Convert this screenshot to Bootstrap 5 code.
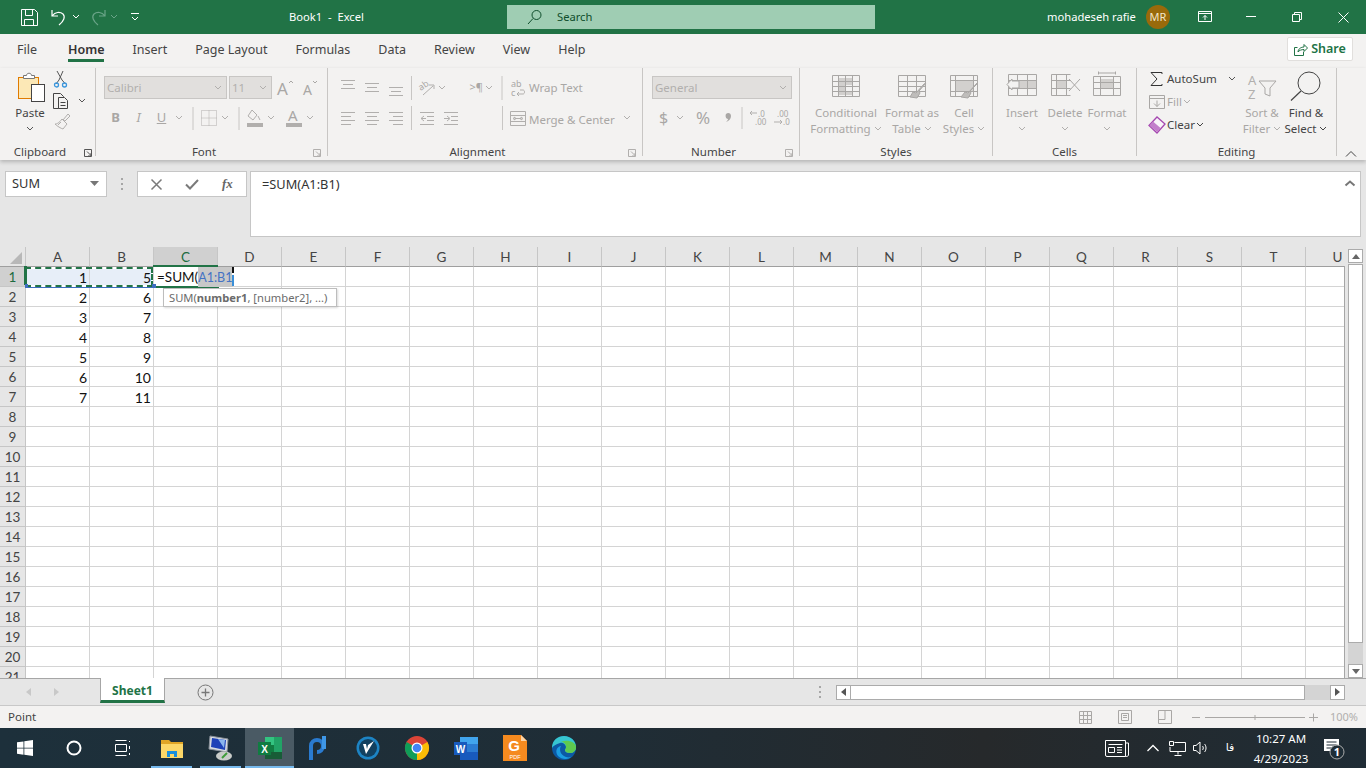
<!DOCTYPE html>
<html lang="en">
<head>
<meta charset="UTF-8">
<title>Book1 - Excel</title>
<link rel="stylesheet" href="https://cdn.jsdelivr.net/npm/bootstrap@5.3.0/dist/css/bootstrap.min.css">
<style>
  body { font-family: "Noto Sans", "Liberation Sans", sans-serif; font-size: 11.5px; color: #444; background: #e6e6e6; height: 768px; overflow: hidden; }
  svg { display: block; flex: none; overflow: visible; }
  .ico { fill: none; stroke: #b1afad; }
  .dis { color: #a9a7a5; }

  /* title bar */
  .xl-title { height: 34px; background: #217346; color: #fff; flex: none; font-size: 11.2px; }
  .qat { width: 289px; padding-left: 20px; }
  .doc-name { width: 218px; white-space: pre; }
  .xl-search { width: 368px; height: 24px; background: #9fcdb3; color: #0f4d2c; padding-left: 20px; gap: 14px; }
  .user-name { margin-left: 172px; width: 99px; }
  .avatar { width: 24px; height: 24px; border-radius: 50%; background: #996a0b; font-size: 11px; color: #f2e6c8; }
  .win-btn { width: 46px; }
  .win-first { margin-left: 12px; }

  /* tabs */
  .xl-tabs { height: 34px; background: #f3f2f1; font-size: 12.5px; padding-left: 17px; flex: none; }
  .rtab { margin-right: 28px; height: 34px; line-height: 32px; white-space: nowrap; }
  .rtab-file { margin-right: 31px; }
  .rtab-on { color: #333; font-weight: 600; border-bottom: 3px solid #217346; height: 28px; }
  .xl-share { width: 66px; height: 24px; background: #fff; border: 1px solid #e1dfdd; border-radius: 2px; color: #217346; font-weight: 600; font-size: 12.5px; margin: 3px 13px 0 auto; gap: 3px; }

  /* ribbon */
  .xl-ribbon { height: 92px; background: #f3f2f1; box-shadow: 0 2px 4px rgba(0,0,0,.22); position: relative; z-index: 3; flex: none; }
  .rgroup { height: 88px; border-right: 1px solid #c8c6c4; flex: none; }
  .g-clip { width: 96px; } .g-font { width: 232px; } .g-align { width: 315px; } .g-num { width: 157px; }
  .g-styles { width: 193px; } .g-cells { width: 144px; } .g-edit { width: 200px; }
  .gbody { height: 77px; }
  .glabel { height: 11px; line-height: 14px; color: #444; }
  .pl-8 { padding-left: 8px; } .pl-7 { padding-left: 7px; } .pl-9 { padding-left: 9px; }
  .rrow1 { height: 23px; }
  .rrow2 { height: 24px; margin-top: 7px; }
  .rcombo { height: 23px; background: #e1dfdd; border: 1px solid #c8c6c4; color: #b1afad; padding: 0 4px 0 2px; flex: none; }
  .c-font { width: 123px; margin-right: 2px; } .c-size { width: 43px; } .c-gen { width: 140px; }
  .tbtn { line-height: 16px; text-align: center; padding-top: 4px; flex: none; white-space: nowrap; }
  .tslot { height: 33px; }
  .tw78 { width: 78px; } .tw54 { width: 54px; } .tw50 { width: 50px; } .tw42 { width: 42px; } .tw44 { width: 44px; } .tw40 { width: 40px; } .tw46 { width: 46px; }
  .tline { height: 16px; white-space: nowrap; gap: 3px; }
  .paste-col { width: 44px; margin-left: 8px; color: #444; }
  .fmt-letter { width: 23px; font-size: 13px; color: #a9a7a5; text-align: center; flex: none; }
  .para-mark { width: 36px; font-size: 11px; flex: none; text-align: right; }
  .merge-txt { padding-top: 3px; }
  .elist { width: 104px; padding-left: 11px; margin-top: -1px; flex: none; }
  .erow { height: 23px; gap: 1px; }
  .rcollapse { margin-left: 8px; margin-top: 82px; }

  /* formula bar */
  .xl-fbar { height: 87px; background: #e6e6e6; padding: 11px 5px 0 5px; flex: none; }
  .xl-name { width: 102px; height: 26px; background: #fff; border: 1px solid #c6c6c6; padding: 0 6px; color: #333; font-size: 12.8px; }
  .fb-dots { width: 30px; height: 26px; }
  .fb-btns { width: 110px; height: 26px; background: #fff; border: 1px solid #c6c6c6; margin-right: 3px; }
  .fb-slot { width: 36px; }
  .fb-input { width: 1111px; height: 66px; background: #fff; border: 1px solid #c6c6c6; padding: 3px 4px 0 11px; font-size: 12.8px; color: #333; }

  /* sheet */
  .xl-main { height: 431px; flex: none; }
  .sheet-wrap { width: 1345px; height: 431px; overflow: hidden; position: relative; background: #fff; flex: none; }
  .sheet-grid { display: grid; grid-template-columns: 26px repeat(21, 64px); grid-auto-rows: 20px; font-family: Lato, "Liberation Sans", sans-serif; font-size: 14px; color: #111; }
  .cell { border-right: 1px solid #d4d4d4; border-bottom: 1px solid #d4d4d4; text-align: right; padding-right: 2px; line-height: 21px; }
  .cell-copy { background: #e7eef8; }
  .hd { background: #e6e6e6; border-right: 1px solid #c6c6c6; border-bottom: 1px solid #c6c6c6; text-align: center; padding: 0; color: #444; font-size: 13.5px; line-height: 20px; }
  .hd-col { border-bottom: 1px solid #9f9f9f; }
  .hd-on { background: #d0d0d0; color: #1c6b3f; }
  .sheet-edge { position: absolute; right: 0; top: 19px; bottom: 0; width: 1px; background: #a6a6a6; }
  .ant-base { position: absolute; left: 25px; top: 20px; width: 128px; height: 20px; border: 2px solid #fff; box-shadow: 0 1px 0 #3d6fc0; }
  .ant-box { position: absolute; left: 25px; top: 20px; width: 128px; height: 20px; border: 2px dashed #217346; }
  .ant-left { position: absolute; left: 24px; top: 19px; width: 3px; height: 19px; background: #217346; }
  .ant-dot { position: absolute; top: 37px; width: 3px; height: 4px; background: #3d6fc0; }
  .dot-a { left: 25px; } .dot-b { left: 152px; width: 4px; }
  .cur-cell { position: absolute; left: 153px; top: 18px; width: 65px; height: 23px; border-top: 2px solid #217346; border-bottom: 2px solid #217346; }
  .cur-handle { position: absolute; left: 214px; top: 39px; width: 5px; height: 4px; background: #217346; }
  .edit-txt { position: absolute; left: 157px; top: 20px; height: 20px; line-height: 20px; font-family: Lato, "Liberation Sans", sans-serif; font-size: 13.5px; color: #111; white-space: nowrap; }
  .edit-ref { color: #4472c4; background: #c8c8c8; display: inline-block; height: 20px; line-height: 21px; font-size: 12.5px; vertical-align: top; padding-right: 1px; }
  .edit-caret { position: absolute; left: 232px; top: 20px; width: 2px; height: 19px; background: linear-gradient(#111 0 30%, #fff 30% 40%, #3a8fd8 40% 100%); }
  .fn-tip { position: absolute; left: 163px; top: 41px; width: 174px; height: 19px; background: #fff; border: 1px solid #bdbdbd; box-shadow: 1px 1px 2px rgba(0,0,0,.15); color: #6b6b6b; padding-left: 5px; line-height: 17px; font-size: 11.2px; white-space: nowrap; }
  .vbar { width: 21px; height: 431px; background: #e6e6e6; padding: 2px 3px 0 3px; flex: none; }
  .sb-btn { height: 14px; background: #fff; border: 1px solid #ababab; flex: none; }
  .sb-thumb { height: 379px; background: #fff; border: 1px solid #ababab; margin-top: 1px; flex: none; }
  .sb-track { background: #d4d4d4; flex-grow: 1; }

  /* sheet tabs */
  .xl-sheets { height: 28px; background: #e6e6e6; border-top: 1px solid #a6a6a6; border-bottom: 1px solid #c8c8c8; flex: none; }
  .sh-nav { width: 100px; padding-left: 26px; gap: 22px; }
  .sh-tab { width: 65px; height: 25px; background: #fff; border: 1px solid #a6a6a6; border-top: 0; border-bottom: 3px solid #217346; color: #217346; font-weight: 700; font-size: 12px; margin-top: -1px; padding-top: 3px; align-self: flex-start; }
  .sh-add { margin-left: 32px; width: 622px; }
  .sh-dots { width: 17px; }
  .hbar { width: 509px; height: 15px; }
  .hb-btn { width: 15px; height: 15px; background: #fff; border: 1px solid #ababab; flex: none; }
  .hb-thumb { width: 454px; height: 15px; background: #fff; border: 1px solid #ababab; border-left: 0; flex: none; }
  .hb-track { flex-grow: 1; height: 15px; background: #d4d4d4; }

  /* status */
  .xl-status { height: 22px; background: #f3f2f1; padding: 0 8px; color: #444; flex: none; }
  .st-right { margin-left: auto; color: #b1afad; }
  .st-view { width: 40px; }
  .st-slider { width: 138px; padding-left: 7px; }
  .st-zoom { width: 35px; font-size: 11px; }

  /* taskbar */
  .xl-task { height: 40px; background: linear-gradient(90deg, #1d303b 0%, #1f2d36 45%, #26292b 72%, #1f2c35 100%); color: #fff; flex: none; font-size: 11.5px; }
  .tk { width: 49px; height: 40px; position: relative; flex: none; }
  .tk-on { background: #4a5a64; }
  .tk-run::after { content: ""; position: absolute; left: 4px; right: 4px; bottom: 0; height: 2px; background: #76b9ed; }
  .tk-on::after { left: 0; right: 0; }
  .tk-tray { margin-left: auto; padding-right: 15px; }
  .tray { width: 24px; }
  .tray-news { width: 36px; margin-right: 6px; }
  .tray-lang { width: 34px; font-family: "DejaVu Sans", sans-serif; font-size: 11px; }
  .tk-clock { width: 68px; text-align: center; line-height: 20px; padding-top: 1px; white-space: nowrap; }
  .tk-note { width: 36px; }
</style>
</head>
<body class="d-flex flex-column">

  <!-- title bar -->
  <div class="xl-title d-flex align-items-center">
    <div class="qat d-flex align-items-center">
      <svg width="22" height="20" viewBox="0 0 22 20" fill="none" stroke="#fff"><path d="M1.500 2.500h13l3 3v13h-16zM5.500 2.500v6h7v-6M4.500 18.500v-6h9v6"/></svg>
      <svg width="27" height="20" viewBox="-9 0 27 20" fill="none" stroke="#fff" stroke-width="1.200"><path d="M1 3v6h6M1.500 8.500C4 5 9 4.500 12 7c2.500 2.500 1 7-4 11"/></svg>
      <svg width="12" height="6" viewBox="-3 0 12 6" fill="none" stroke="#fff"><path d="M1 1l3 3 3-3"/></svg>
      <svg width="25" height="20" viewBox="-9 0 25 20" fill="none" stroke="#6aa488" stroke-width="1.200"><path d="M15 3v6H9M14.500 8.500C12 5 7 4.500 4 7c-2.500 2.500-1 7 4 11"/></svg>
      <svg width="14" height="6" viewBox="-4 0 14 6" fill="none" stroke="#6aa488"><path d="M1 1l3 3 3-3"/></svg>
      <svg width="30" height="10" viewBox="-10 0 30 10" fill="none" stroke="#fff"><path d="M1 1.500h8M2 5l3 3 3-3"/></svg>
    </div>
    <div class="doc-name">Book1  -  Excel</div>
    <div class="xl-search d-flex align-items-center">
      <svg width="16" height="16" viewBox="0 0 16 16" fill="none" stroke="#0f4d2c"><circle cx="9.500" cy="6" r="4.500"/><path d="M6 9.500L1 15"/></svg>
      <span>Search</span>
    </div>
    <div class="user-name">mohadeseh rafie</div>
    <div class="avatar d-flex align-items-center justify-content-center">MR</div>
    <div class="win-btn win-first d-flex justify-content-center"><svg width="14" height="12" viewBox="0 0 14 12" fill="none" stroke="#fff"><path d="M.5 .5h13v10H.5zM.5 2.500h13M7 9V4.500M5 6.500l2-2 2 2"/></svg></div>
    <div class="win-btn d-flex justify-content-center"><svg width="10" height="2" viewBox="0 0 10 2" stroke="#fff"><path d="M0 .5h10"/></svg></div>
    <div class="win-btn d-flex justify-content-center"><svg width="10" height="10" viewBox="0 0 10 10" fill="none" stroke="#fff"><path d="M.5 2.500h7v7h-7zM2.500 2.500v-2h7v7h-2"/></svg></div>
    <div class="win-btn d-flex justify-content-center"><svg width="11" height="11" viewBox="0 0 11 11" fill="none" stroke="#fff"><path d="M.5 .5l10 10M10.500 .5l-10 10"/></svg></div>
  </div>

  <!-- ribbon tabs -->
  <div class="xl-tabs d-flex align-items-start">
    <div class="rtab rtab-file">File</div>
    <div class="rtab rtab-on">Home</div>
    <div class="rtab">Insert</div>
    <div class="rtab">Page Layout</div>
    <div class="rtab">Formulas</div>
    <div class="rtab">Data</div>
    <div class="rtab">Review</div>
    <div class="rtab">View</div>
    <div class="rtab">Help</div>
    <div class="xl-share d-flex align-items-center justify-content-center">
      <svg width="14" height="13" viewBox="0 0 14 13" fill="none" stroke="#217346"><path d="M3.500 4.500H.5v8h9V9M4 9c0-3 3-5 6-5V1.500l3.500 3.500L10 8.500V6.500C7.500 6.500 5 7.500 4 9z"/></svg>
      <span>Share</span>
    </div>
  </div>

  <!-- ribbon -->
  <div class="xl-ribbon d-flex">
    <!-- clipboard -->
    <div class="rgroup g-clip d-flex flex-column">
      <div class="gbody d-flex">
        <div class="paste-col tbtn d-flex flex-column align-items-center">
          <svg class="tslot" width="32" height="33" viewBox="0 0 32 33"><rect x="4.500" y="5.500" width="20" height="21" fill="#fce8b6" stroke="#e07b00"/><path d="M9.500 6.500v-3h3c0-3 5-3 5 0h3v3z" fill="#fff" stroke="#777"/><rect x="17.500" y="12.500" width="13" height="17" fill="#fff" stroke="#444"/></svg>
          <div>Paste</div>
          <div class="tline d-flex align-items-center"><svg width="8" height="6" viewBox="0 0 8 6" fill="none" stroke="#555"><path d="M1 1l3 3 3-3"/></svg></div>
        </div>
        <div class="d-flex flex-column">
          <svg width="20" height="22" viewBox="0 -3 20 22" fill="none"><path d="M5 0l5 9 3.500 4M11 0L7 9l-3 4" stroke="#555"/><circle cx="4.500" cy="14" r="2" stroke="#3a96dd" stroke-width="1.300"/><circle cx="12.500" cy="14" r="2" stroke="#3a96dd" stroke-width="1.300"/></svg>
          <div class="d-flex align-items-center">
            <svg width="26" height="22" viewBox="0 0 26 22" fill="#f3f2f1" stroke="#444"><path d="M1.500 3.500h7l3 3v12h-10z"/><path d="M6.500 7.500h6l3 3v8h-9zM8.500 12.500h5M8.500 15.500h5"/></svg>
            <svg width="8" height="6" viewBox="0 0 8 6" fill="none" stroke="#555"><path d="M1 1l3 3 3-3"/></svg>
          </div>
          <svg width="20" height="20" viewBox="0 0 20 20" fill="none" stroke="#b1afad"><path d="M11 8l5-6 2 2-5 5zM10 7l5 5-4 5c-2-.5-6-3-8-5 2 0 4-1 7-5zM6 13l3-3"/></svg>
        </div>
      </div>
      <div class="glabel d-flex"><div class="flex-fill text-center">Clipboard</div><svg class="mt-1" width="15" height="10" viewBox="0 0 15 10" fill="none" stroke="#555"><path d="M4.500 .5h7v7h-7zM7 2.500l4 4M11 4v3H8"/></svg></div>
    </div>

    <!-- font -->
    <div class="rgroup g-font d-flex flex-column">
      <div class="gbody pl-8 pt-2">
        <div class="rrow1 d-flex align-items-center">
          <div class="rcombo c-font d-flex align-items-center justify-content-between"><span>Calibri</span><svg width="8" height="6" viewBox="0 0 8 6" fill="none" stroke="#b1afad"><path d="M1 1l3 3 3-3"/></svg></div>
          <div class="rcombo c-size d-flex align-items-center justify-content-between"><span>11</span><svg width="8" height="6" viewBox="0 0 8 6" fill="none" stroke="#b1afad"><path d="M1 1l3 3 3-3"/></svg></div>
          <svg width="26" height="23" viewBox="0 0 26 23"><text x="5" y="19" font-family="Noto Sans" font-size="17" fill="#a9a7a5">A</text><path d="M17 7l2-2 2 2" fill="none" stroke="#a9a7a5"/></svg>
          <svg width="24" height="23" viewBox="0 0 24 23"><text x="5" y="19" font-family="Noto Sans" font-size="14" fill="#a9a7a5">A</text><path d="M15 5l2 2 2-2" fill="none" stroke="#a9a7a5"/></svg>
        </div>
        <div class="rrow2 d-flex align-items-center">
          <span class="fmt-letter fw-bold">B</span>
          <span class="fmt-letter fst-italic">I</span>
          <span class="fmt-letter text-decoration-underline">U</span>
          <svg width="14" height="6" viewBox="0 0 14 6" fill="none" stroke="#b1afad"><path d="M3 1l3 3 3-3"/></svg>
          <svg width="12" height="24" viewBox="0 0 12 24" stroke="#c8c6c4"><path d="M6 1v23"/></svg>
          <svg width="19" height="16" viewBox="0 0 19 16" fill="none" stroke="#b1afad" stroke-dasharray="1 1"><path d="M2.500 .5h15v15h-15zM10 .5v15M2.500 8h15"/></svg>
          <svg width="16" height="6" viewBox="0 0 16 6" fill="none" stroke="#b1afad"><path d="M4 1l3 3 3-3"/></svg>
          <svg width="10" height="24" viewBox="0 0 10 24" stroke="#c8c6c4"><path d="M5 1v23"/></svg>
          <svg width="22" height="18" viewBox="0 0 22 18"><path d="M8 1l5 5-4 5-5-4zM14 7l2 4" fill="none" stroke="#b1afad"/><rect x="3" y="14" width="16" height="4" fill="#b1afad"/></svg>
          <svg width="12" height="6" viewBox="0 0 12 6" fill="none" stroke="#b1afad"><path d="M2 1l3 3 3-3"/></svg>
          <svg width="26" height="18" viewBox="0 0 26 18"><text x="10" y="12" font-family="Noto Sans" font-size="15" fill="#a9a7a5">A</text><rect x="8" y="14" width="16" height="4" fill="#b1afad"/></svg>
          <svg width="14" height="6" viewBox="0 0 14 6" fill="none" stroke="#b1afad"><path d="M3 1l3 3 3-3"/></svg>
        </div>
      </div>
      <div class="glabel d-flex"><div class="flex-fill text-center">Font</div><svg class="mt-1" width="15" height="10" viewBox="0 0 15 10" fill="none" stroke="#b1afad"><path d="M1.500 .5h7v7h-7zM4 2.500l4 4M8 4v3H5"/></svg></div>
    </div>

    <!-- alignment -->
    <div class="rgroup g-align d-flex flex-column">
      <div class="gbody pl-8 pt-2">
        <div class="rrow1 d-flex align-items-center">
          <svg width="24" height="20" viewBox="0 0 24 20" class="ico"><path d="M5 2.500h14M7 6.500h10M5 10.500h14"/></svg>
          <svg width="24" height="20" viewBox="0 0 24 20" class="ico"><path d="M5 5.500h14M7 9.500h10M5 13.500h14"/></svg>
          <svg width="24" height="20" viewBox="0 0 24 20" class="ico"><path d="M5 9.500h14M7 13.500h10M5 17.500h14"/></svg>
          <svg width="7" height="24" viewBox="0 0 7 24" stroke="#c8c6c4"><path d="M3.500 0v24"/></svg>
          <svg width="23" height="20" viewBox="0 0 23 20"><text x="4" y="11" font-family="Noto Sans" font-size="9" fill="#a9a7a5" transform="rotate(-35 8 9)">ab</text><path d="M8 17l10-9M14 7h5v4" fill="none" stroke="#b1afad"/></svg>
          <svg width="9" height="6" viewBox="0 0 9 6" fill="none" stroke="#b1afad"><path d="M1 1l3 3 3-3"/></svg>
          <span class="dis para-mark">&gt;¶</span>
          <svg width="13" height="6" viewBox="0 0 13 6" fill="none" stroke="#b1afad"><path d="M3 1l3 3 3-3"/></svg>
          <svg width="12" height="24" viewBox="0 0 12 24" stroke="#c8c6c4"><path d="M6 0v24"/></svg>
          <svg width="21" height="20" viewBox="0 0 21 20"><text x="3" y="9" font-family="Noto Sans" font-size="9" fill="#a9a7a5">ab</text><text x="3" y="18" font-family="Noto Sans" font-size="9" fill="#a9a7a5">c</text><path d="M10 16h5c2 0 2-4 0-4h-3M11 14l-2 2 2 2" fill="none" stroke="#b1afad"/></svg>
          <span class="dis">Wrap Text</span>
        </div>
        <div class="rrow2 d-flex align-items-center">
          <svg width="24" height="20" viewBox="0 0 24 20" class="ico"><path d="M5 4.500h14M5 8.500h10M5 12.500h14M5 16.500h10"/></svg>
          <svg width="24" height="20" viewBox="0 0 24 20" class="ico"><path d="M5 4.500h14M7 8.500h10M5 12.500h14M7 16.500h10"/></svg>
          <svg width="24" height="20" viewBox="0 0 24 20" class="ico"><path d="M5 4.500h14M9 8.500h10M5 12.500h14M9 16.500h10"/></svg>
          <svg width="7" height="24" viewBox="0 0 7 24" stroke="#c8c6c4"><path d="M3.500 0v24"/></svg>
          <svg width="24" height="20" viewBox="0 0 24 20" class="ico"><path d="M5 4.500h14M12 8.500h7M12 12.500h7M5 16.500h14M9 8l-3 2.500 3 2.500M6 10.500h5"/></svg>
          <svg width="24" height="20" viewBox="0 0 24 20" class="ico"><path d="M5 4.500h14M12 8.500h7M12 12.500h7M5 16.500h14M8 8l3 2.500L8 13M5 10.500h5"/></svg>
          <svg width="45" height="24" viewBox="0 0 45 24" stroke="#c8c6c4"><path d="M39.500 0v24"/></svg>
          <svg width="21" height="18" viewBox="0 0 21 18" class="ico"><path d="M2.500 2.500h15v14h-15zM2.500 6.500h15M2.500 12.500h15M7 9.500h6M5 9.500l2-1.500v3zM15 9.500l-2-1.500v3z"/></svg>
          <span class="dis merge-txt">Merge &amp; Center</span>
          <svg class="ms-2" width="10" height="6" viewBox="0 0 10 6" fill="none" stroke="#b1afad"><path d="M1 1l3 3 3-3"/></svg>
        </div>
      </div>
      <div class="glabel d-flex"><div class="flex-fill text-center">Alignment</div><svg class="mt-1" width="15" height="10" viewBox="0 0 15 10" fill="none" stroke="#b1afad"><path d="M1.500 .5h7v7h-7zM4 2.500l4 4M8 4v3H5"/></svg></div>
    </div>

    <!-- number -->
    <div class="rgroup g-num d-flex flex-column">
      <div class="gbody pl-9 pt-2">
        <div class="rrow1 d-flex align-items-center">
          <div class="rcombo c-gen d-flex align-items-center justify-content-between"><span>General</span><svg width="8" height="6" viewBox="0 0 8 6" fill="none" stroke="#b1afad"><path d="M1 1l3 3 3-3"/></svg></div>
        </div>
        <div class="rrow2 d-flex align-items-center">
          <span class="fmt-letter fs-6">$</span>
          <svg width="12" height="6" viewBox="0 0 12 6" fill="none" stroke="#b1afad"><path d="M2 1l3 3 3-3"/></svg>
          <svg width="32" height="20" viewBox="0 0 32 20"><text x="16" y="16" text-anchor="middle" font-family="Noto Sans" font-size="17" fill="#a9a7a5">%</text></svg>
          <svg width="18" height="20" viewBox="0 0 18 20"><path d="M7 6c2-2 5-1 5 2 0 3-2 5-5 6 1-1 2-2 2-3-2 0-3-3-2-5z" fill="#a9a7a5"/></svg>
          <svg width="10" height="24" viewBox="0 0 10 24" stroke="#c8c6c4"><path d="M5 1v22"/></svg>
          <svg width="22" height="20" viewBox="0 0 22 20"><text x="11" y="9" font-family="Noto Sans" font-size="8" fill="#a9a7a5">.0</text><text x="8" y="17" font-family="Noto Sans" font-size="8" fill="#a9a7a5">.00</text><path d="M3 5h7M5 3L3 5l2 2" fill="none" stroke="#b1afad"/></svg>
          <svg width="24" height="20" viewBox="0 0 24 20"><text x="8" y="9" font-family="Noto Sans" font-size="8" fill="#a9a7a5">.00</text><text x="14" y="17" font-family="Noto Sans" font-size="8" fill="#a9a7a5">.0</text><path d="M5 14h8M11 12l2 2-2 2" fill="none" stroke="#b1afad"/></svg>
        </div>
      </div>
      <div class="glabel d-flex"><div class="flex-fill text-center">Number</div><svg class="mt-1" width="15" height="10" viewBox="0 0 15 10" fill="none" stroke="#b1afad"><path d="M1.500 .5h7v7h-7zM4 2.500l4 4M8 4v3H5"/></svg></div>
    </div>

    <!-- styles -->
    <div class="rgroup g-styles d-flex flex-column">
      <div class="gbody d-flex pl-7 dis">
        <div class="tbtn tw78 d-flex flex-column align-items-center">
          <svg class="tslot" width="30" height="33" viewBox="0 -3 30 33" fill="none" stroke="#a9a7a5"><rect x="7" y="3" width="14" height="17" fill="#d2d0ce" stroke="none"/><rect x="14" y="10" width="7" height="6" fill="#f3f2f1" stroke="none"/><path d="M1.500 .5h27v21h-27zM1.500 6.500h27M1.500 11.500h27M1.500 16.500h27M7.500 .5v21M14.500 .5v21M21.500 .5v21"/></svg>
          <div>Conditional</div>
          <div class="tline d-flex align-items-center">Formatting<svg width="8" height="6" viewBox="0 0 8 6" fill="none" stroke="#b1afad"><path d="M1 1l3 3 3-3"/></svg></div>
        </div>
        <div class="tbtn tw54 d-flex flex-column align-items-center">
          <svg class="tslot" width="30" height="33" viewBox="0 -3 30 33" fill="none" stroke="#a9a7a5"><path d="M1.500 .5h27v21h-27zM1.500 6.500h27M1.500 11.500h27M1.500 16.500h27M10.500 .5v21M19.500 .5v21"/><path d="M27 9l-8 9-3-1-3 5 7 1 3-5-1-2 7-8z" fill="#bfbdbb"/></svg>
          <div>Format as</div>
          <div class="tline d-flex align-items-center">Table<svg width="8" height="6" viewBox="0 0 8 6" fill="none" stroke="#b1afad"><path d="M1 1l3 3 3-3"/></svg></div>
        </div>
        <div class="tbtn tw50 d-flex flex-column align-items-center">
          <svg class="tslot" width="30" height="33" viewBox="0 -3 30 33" fill="none" stroke="#a9a7a5"><rect x="6" y="5" width="19" height="12" fill="#d2d0ce" stroke="none"/><path d="M1.500 .5h27v21h-27zM1.500 5.500h27M1.500 16.500h27M6.500 .5v21M24.500 .5v21"/><path d="M28 8l-9 10-3-1-4 5 7 1 3-5-1-2 8-8z" fill="#bfbdbb"/></svg>
          <div>Cell</div>
          <div class="tline d-flex align-items-center">Styles<svg width="8" height="6" viewBox="0 0 8 6" fill="none" stroke="#b1afad"><path d="M1 1l3 3 3-3"/></svg></div>
        </div>
      </div>
      <div class="glabel text-center">Styles</div>
    </div>

    <!-- cells -->
    <div class="rgroup g-cells d-flex flex-column">
      <div class="gbody d-flex pl-8 dis">
        <div class="tbtn tw42 d-flex flex-column align-items-center">
          <svg class="tslot" width="32" height="33" viewBox="0 -1 32 33" fill="none" stroke="#a9a7a5"><rect x="12" y="7" width="19" height="9" fill="#d2d0ce" stroke="none"/><path d="M2.500 1.500h28v21h-28zM2.500 7.500h28M2.500 15.500h28M11.500 1.500v21M21.500 1.500v21"/><path d="M13 8H6V6l-5 5.500 5 5.500v-2h7z" fill="#f3f2f1"/></svg>
          <div>Insert</div>
          <div class="tline d-flex align-items-center"><svg width="8" height="6" viewBox="0 0 8 6" fill="none" stroke="#b1afad"><path d="M1 1l3 3 3-3"/></svg></div>
        </div>
        <div class="tbtn tw44 d-flex flex-column align-items-center">
          <svg class="tslot" width="32" height="33" viewBox="0 -1 32 33" fill="none" stroke="#a9a7a5"><rect x="7" y="7" width="11" height="9" fill="#d2d0ce" stroke="none"/><path d="M21.500 1.500h-19v21h19M2.500 7.500h19M2.500 15.500h19M7.500 1.500v21M17.500 1.500v21M20 6l11 12M31 6L20 18"/></svg>
          <div>Delete</div>
          <div class="tline d-flex align-items-center"><svg width="8" height="6" viewBox="0 0 8 6" fill="none" stroke="#b1afad"><path d="M1 1l3 3 3-3"/></svg></div>
        </div>
        <div class="tbtn tw40 d-flex flex-column align-items-center">
          <svg class="tslot" width="30" height="33" viewBox="0 1 30 33" fill="none" stroke="#a9a7a5"><rect x="8" y="8" width="14" height="9" fill="#d2d0ce" stroke="none"/><path d="M1.500 5.500h27v19h-27zM1.500 11.500h27M1.500 17.500h27M8.500 5.500v19M21.500 5.500v19M6.500 .5v3M23.500 .5v3M6.500 2h17"/></svg>
          <div>Format</div>
          <div class="tline d-flex align-items-center"><svg width="8" height="6" viewBox="0 0 8 6" fill="none" stroke="#b1afad"><path d="M1 1l3 3 3-3"/></svg></div>
        </div>
      </div>
      <div class="glabel text-center">Cells</div>
    </div>

    <!-- editing -->
    <div class="rgroup g-edit d-flex flex-column">
      <div class="gbody d-flex">
        <div class="elist">
          <div class="erow d-flex align-items-center">
            <svg width="18" height="16" viewBox="0 0 18 16" fill="none" stroke="#333"><path d="M14 3V1.500H3L9 8l-6 6.500h11V13"/></svg>
            <span>AutoSum</span>
            <svg class="ms-2" width="12" height="6" viewBox="0 0 12 6" fill="none" stroke="#555"><path d="M3 1l3 3 3-3"/></svg>
          </div>
          <div class="erow d-flex align-items-center dis">
            <svg width="18" height="16" viewBox="0 0 18 16" fill="none" stroke="#a9a7a5"><path d="M1.500 1.500h15v13h-15zM1.500 4.500h15M9 6.500v6M6 9.500l3 3 3-3"/></svg>
            <span>Fill</span>
            <svg width="8" height="6" viewBox="0 0 8 6" fill="none" stroke="#b1afad"><path d="M1 1l3 3 3-3"/></svg>
          </div>
          <div class="erow d-flex align-items-center">
            <svg width="18" height="18" viewBox="0 0 18 18"><path d="M1 9.500L9 1l8 7-8 9z" fill="#f8f3f9" stroke="#a548b0" stroke-width="1.300"/><path d="M1.500 9.500l3.500-4 7.500 6.500L9 16z" fill="#c27fcb"/></svg>
            <span>Clear</span>
            <svg width="8" height="6" viewBox="0 0 8 6" fill="none" stroke="#444"><path d="M1 1l3 3 3-3"/></svg>
          </div>
        </div>
        <div class="tbtn tw42 d-flex flex-column align-items-center dis">
          <svg class="tslot" width="32" height="33" viewBox="0 0 32 33" fill="none"><text x="2" y="13" font-family="Noto Sans" font-size="13" fill="#b1afad">A</text><text x="2" y="27" font-family="Noto Sans" font-size="13" fill="#b1afad">Z</text><path d="M13 9h17l-6 7v8l-5-2v-6z" stroke="#a9a7a5"/></svg>
          <div>Sort &amp;</div>
          <div class="tline d-flex align-items-center">Filter<svg width="8" height="6" viewBox="0 0 8 6" fill="none" stroke="#b1afad"><path d="M1 1l3 3 3-3"/></svg></div>
        </div>
        <div class="tbtn tw46 d-flex flex-column align-items-center">
          <svg class="tslot" width="32" height="33" viewBox="0 0 32 33" fill="none" stroke="#444"><circle cx="19" cy="11" r="11"/><path d="M11 19L1 28.500" stroke-width="1.200"/></svg>
          <div>Find &amp;</div>
          <div class="tline d-flex align-items-center">Select<svg width="8" height="6" viewBox="0 0 8 6" fill="none" stroke="#444"><path d="M1 1l3 3 3-3"/></svg></div>
        </div>
      </div>
      <div class="glabel text-center">Editing</div>
    </div>
    <svg class="rcollapse" width="12" height="8" viewBox="0 0 12 8" fill="none" stroke="#444"><path d="M1 6.500l5-5 5 5"/></svg>
  </div>

  <!-- formula bar -->
  <div class="xl-fbar d-flex align-items-start">
    <div class="xl-name d-flex align-items-center justify-content-between">SUM<svg width="10" height="6" viewBox="0 0 10 6" fill="#777"><path d="M0 0h9L4.500 5z"/></svg></div>
    <div class="fb-dots d-flex align-items-center justify-content-center"><svg width="3" height="12" viewBox="0 0 3 12" fill="#a6a6a6"><rect y="0" width="2" height="2"/><rect y="5" width="2" height="2"/><rect y="10" width="2" height="2"/></svg></div>
    <div class="fb-btns d-flex align-items-center">
      <div class="fb-slot d-flex justify-content-center"><svg width="11" height="11" viewBox="0 0 11 11" fill="none" stroke="#7a7a7a" stroke-width="1.500"><path d="M.5 .5l10 10M10.500 .5l-10 10"/></svg></div>
      <div class="fb-slot d-flex justify-content-center"><svg width="14" height="11" viewBox="0 0 14 11" fill="none" stroke="#7a7a7a" stroke-width="2"><path d="M1 5.500l4 4 8-8.500"/></svg></div>
      <div class="fb-slot d-flex justify-content-center"><svg width="16" height="14" viewBox="0 0 16 14"><text x="2" y="11" font-family="Liberation Serif" font-style="italic" font-weight="700" font-size="13" fill="#666">fx</text></svg></div>
    </div>
    <div class="fb-input d-flex justify-content-between align-items-start">=SUM(A1:B1)<svg class="mt-1" width="12" height="8" viewBox="0 0 12 8" fill="none" stroke="#777" stroke-width="2"><path d="M1.500 6.500l4.500-4 4.500 4"/></svg></div>
  </div>

  <!-- sheet -->
  <div class="xl-main d-flex">
    <div class="sheet-wrap">
      <div class="sheet-grid" id="grid"></div>
      <!-- overlays on the sheet: copy range, active cell, function tip -->
      <div class="sheet-edge"></div>
      <div class="ant-base"></div>
      <div class="ant-box"></div>
      <div class="ant-left"></div>
      <div class="ant-dot dot-a"></div>
      <div class="cur-cell"></div>
      <div class="ant-dot dot-b"></div>
      <div class="cur-handle"></div>
      <div class="edit-txt">=SUM(<span class="edit-ref">A1:B1</span></div>
      <div class="edit-caret"></div>
      <div class="fn-tip">SUM(<b>number1</b>, [number2], ...)</div>
    </div>
    <div class="vbar d-flex flex-column">
      <div class="sb-btn d-flex align-items-center justify-content-center"><svg width="8" height="5" viewBox="0 0 8 5" fill="#666"><path d="M4 0l4 5H0z"/></svg></div>
      <div class="sb-thumb"></div>
      <div class="sb-track"></div>
      <div class="sb-btn d-flex align-items-center justify-content-center"><svg width="8" height="5" viewBox="0 0 8 5" fill="#666"><path d="M4 5L8 0H0z"/></svg></div>
    </div>
  </div>

  <!-- sheet tabs -->
  <div class="xl-sheets d-flex align-items-center">
    <div class="sh-nav d-flex align-items-center">
      <svg width="6" height="8" viewBox="0 0 6 8" fill="#c8c8c8"><path d="M5 0v8L0 4z"/></svg>
      <svg width="6" height="8" viewBox="0 0 6 8" fill="#c8c8c8"><path d="M0 0v8l5-4z"/></svg>
    </div>
    <div class="sh-tab d-flex align-items-center justify-content-center">Sheet1</div>
    <div class="sh-add">
      <svg width="17" height="17" viewBox="0 0 17 17" fill="none" stroke="#777"><circle cx="8.500" cy="8.500" r="7.500"/><path d="M8.500 4.500v8M4.500 8.500h8" stroke-width="1.300"/></svg>
    </div>
    <div class="sh-dots"><svg width="3" height="12" viewBox="0 0 3 12" fill="#a6a6a6"><rect y="0" width="2" height="2"/><rect y="5" width="2" height="2"/><rect y="10" width="2" height="2"/></svg></div>
    <div class="hbar d-flex">
      <div class="hb-btn d-flex align-items-center justify-content-center"><svg width="5" height="8" viewBox="0 0 5 8" fill="#555"><path d="M5 0v8L0 4z"/></svg></div>
      <div class="hb-thumb"></div>
      <div class="hb-track"></div>
      <div class="hb-btn d-flex align-items-center justify-content-center"><svg width="5" height="8" viewBox="0 0 5 8" fill="#555"><path d="M0 0v8l5-4z"/></svg></div>
    </div>
  </div>

  <!-- status bar -->
  <div class="xl-status d-flex align-items-center">
    <span>Point</span>
    <div class="st-right d-flex align-items-center">
      <div class="st-view d-flex justify-content-center"><svg width="13" height="13" viewBox="0 0 13 13" fill="none" stroke="#a9a7a5"><path d="M.5 .5h12v12H.5zM4.500 .5v12M8.500 .5v12M.5 4.500h12M.5 8.500h12"/></svg></div>
      <div class="st-view d-flex justify-content-center"><svg width="14" height="14" viewBox="0 0 14 14" fill="none" stroke="#a9a7a5"><path d="M.5 .5h13v13H.5zM3.500 3.500h7v7h-7zM5 5.500h4M5 7.500h4"/></svg></div>
      <div class="st-view d-flex justify-content-center"><svg width="14" height="14" viewBox="0 0 14 14" fill="none" stroke="#a9a7a5"><path d="M.5 .5h13v13H.5zM.5 9.500h6.500V.5"/></svg></div>
      <div class="st-slider"><svg width="126" height="9" viewBox="0 0 126 9" fill="none" stroke="#a9a7a5"><path d="M0 4.500h8M13 4.500h100M63 2v5M117 4.500h9M121.500 .5v8"/></svg></div>
      <span class="st-zoom text-end">100%</span>
    </div>
  </div>

  <!-- taskbar -->
  <div class="xl-task d-flex align-items-center">
    <div class="tk d-flex align-items-center justify-content-center"><svg width="16" height="16" viewBox="0 0 16 16" fill="#fff"><path d="M0 2.300l6.500-.9v6.300H0zM7.300 1.300L16 0v7.700H7.300zM0 8.400h6.500v6.300L0 13.800zM7.300 8.400H16V16l-8.700-1.200z"/></svg></div>
    <div class="tk d-flex align-items-center justify-content-center"><svg width="16" height="16" viewBox="0 0 16 16" fill="none" stroke="#fff" stroke-width="2"><circle cx="8" cy="8" r="6.500"/></svg></div>
    <div class="tk d-flex align-items-center justify-content-center"><svg width="16" height="16" viewBox="0 0 16 16" fill="none" stroke="#fff"><path d="M.5 .5h11M.5 15.500h11M.5 4.500h11v7H.5zM14.500 1v1M14.500 6v3M14.500 13v2"/></svg></div>
    <div class="tk tk-run d-flex align-items-center justify-content-center"><svg width="22" height="20" viewBox="0 0 22 20"><path d="M0 2h8l2 2h12v4H0z" fill="#e0a526"/><rect y="6" width="22" height="14" fill="#fcd768"/><path d="M6 19v-6h10v6h-3v-3H9v3z" fill="#1a8fdb"/></svg></div>
    <div class="tk tk-run d-flex align-items-center justify-content-center"><svg width="26" height="26" viewBox="0 0 26 26"><path d="M2 1l18 3-1 13L1 14z" fill="#d8dce2" stroke="#8b929b"/><path d="M4 3l14 2-1 10L3 12z" fill="#1f42b8"/><path d="M10 4l7 1-1 8z" fill="#8bb6ee"/><ellipse cx="16" cy="21" rx="8" ry="4.500" fill="#c9ccc9"/><path d="M14 23l5-5" stroke="#3f9c3a" stroke-width="2"/></svg></div>
    <div class="tk tk-on tk-run d-flex align-items-center justify-content-center"><svg width="24" height="24" viewBox="0 0 24 24"><rect x="7" y="1" width="17" height="22" fill="#21a366"/><rect x="7" y="1" width="9" height="8" fill="#33c481"/><rect x="7" y="9" width="9" height="7" fill="#107c41"/><rect x="16" y="9" width="8" height="7" fill="#21a366"/><rect x="7" y="16" width="17" height="7" fill="#185c37"/><rect x="0" y="6" width="13" height="13" fill="#107c41"/><text x="6.500" y="16.500" text-anchor="middle" font-family="Liberation Sans" font-weight="700" font-size="10" fill="#fff">X</text></svg></div>
    <div class="tk d-flex align-items-center justify-content-center"><svg width="20" height="26" viewBox="0 0 20 26" fill="none"><path d="M2 25V11c0-4 3-6 6-6s6 2 6 6-3 6-6 6" stroke="#2a7bd0" stroke-width="4"/><path d="M15 14V1" stroke="#3f97e6" stroke-width="4"/></svg></div>
    <div class="tk d-flex align-items-center justify-content-center"><svg width="24" height="24" viewBox="0 0 24 24"><circle cx="12" cy="12" r="11.500" fill="#1d84c4"/><circle cx="12" cy="12" r="9" fill="#12405f"/><path d="M7 8l3 10 8-13-6 4-1 4-1-5z" fill="#fff"/></svg></div>
    <div class="tk d-flex align-items-center justify-content-center"><svg width="24" height="24" viewBox="0 0 24 24"><circle cx="12" cy="12" r="12" fill="#db4437"/><path d="M12 12L22.400 6A12 12 0 0 1 12 24z" fill="#fbbc05"/><path d="M12 12L12 24A12 12 0 0 1 1.600 6z" fill="#0f9d58"/><circle cx="12" cy="12" r="5.500" fill="#fff"/><circle cx="12" cy="12" r="4.300" fill="#4285f4"/></svg></div>
    <div class="tk d-flex align-items-center justify-content-center"><svg width="24" height="24" viewBox="0 0 24 24"><rect x="6" y="1" width="18" height="23" fill="#2b7cd3"/><rect x="6" y="1" width="18" height="7" fill="#41a5ee"/><rect x="6" y="16" width="18" height="8" fill="#185abd"/><rect x="0" y="6" width="13" height="13" fill="#185abd"/><text x="6.500" y="16.500" text-anchor="middle" font-family="Liberation Sans" font-weight="700" font-size="10" fill="#fff">W</text></svg></div>
    <div class="tk d-flex align-items-center justify-content-center"><svg width="24" height="26" viewBox="0 0 24 26"><path d="M0 0h18l6 6v20H0z" fill="#f58a1f"/><path d="M18 0l6 6h-6z" fill="#fbd3a6"/><text x="11" y="16" text-anchor="middle" font-family="Liberation Sans" font-weight="700" font-size="15" fill="#fff">G</text><text x="12" y="24" text-anchor="middle" font-family="Liberation Sans" font-size="5.500" fill="#fff">PDF</text></svg></div>
    <div class="tk d-flex align-items-center justify-content-center"><svg width="24" height="24" viewBox="0 0 24 24"><circle cx="12" cy="12" r="12" fill="#0c59a4"/><path d="M0 12C0 4 6 0 12 0c7 0 12 5 12 11 0 4-3 6-6 6-3 0-5-1-5-3 0-1 1-1 1-3 0-2-3-5-6-4-4 1-7 3-8 5z" fill="#37c6d0"/><path d="M24 11c0 4-3 6-6 6-3 0-5-1-5-3 0-1 1-1 1-3 0-3-2-5-5-5 6-3 15 0 15 5z" fill="#5fc94f"/><path d="M6 20c-3-4-2-9 3-10-2 3-1 9 5 11 3 1 5 0 6-1-3 4-10 4-14 0z" fill="#1b9de2"/></svg></div>

    <div class="tk-tray d-flex align-items-center">
      <div class="tray-news d-flex justify-content-center"><svg width="24" height="18" viewBox="0 0 24 18" fill="none" stroke="#fff"><path d="M.5 1.500h20v16H2A1.500 1.500 0 0 1 .5 16zM20.500 4h3v12c0 1-1 1.500-3 1.500M3.500 5.500h14M3.500 8.500h6v5h-6zM12 8.500h5M12 11h5M12 13.500h5"/></svg></div>
      <div class="tray d-flex justify-content-center"><svg width="12" height="8" viewBox="0 0 12 8" fill="none" stroke="#fff" stroke-width="1.300"><path d="M.5 7L6 1.500 11.500 7"/></svg></div>
      <div class="tray d-flex justify-content-center"><svg width="17" height="15" viewBox="0 0 17 15" fill="none" stroke="#fff"><path d="M5.500 1.500h11v9H1V6M9 10.500v3M5.500 14.500h7M.5 .5h4v4h-4z"/></svg></div>
      <div class="tray d-flex justify-content-center"><svg width="16" height="14" viewBox="0 0 16 14" fill="none" stroke="#fff"><path d="M.5 4.500h2.500L7 1v12L3 9.500H.5zM9.500 5c1 1 1 3 0 4M11.500 3c2 2 2 6 0 8"/></svg></div>
      <div class="tray-lang text-center">فا</div>
      <div class="tk-clock"><div>10:27 AM</div><div>4/29/2023</div></div>
      <div class="tk-note d-flex justify-content-center"><svg width="24" height="24" viewBox="0 0 24 24"><path d="M3 3h15v12h-5l-2 3v-3H3z" fill="#fff"/><path d="M5.500 6h10M5.500 9h10M5.500 12h7" stroke="#1f2d36"/><circle cx="16" cy="16" r="7" fill="#1f2d36" stroke="#aaa"/><text x="16" y="20" text-anchor="middle" font-family="Noto Sans" font-weight="700" font-size="11" fill="#fff">1</text></svg></div>
    </div>
  </div>

<script src="https://cdn.jsdelivr.net/npm/bootstrap@5.3.0/dist/js/bootstrap.bundle.min.js"></script>
<script>
  // spreadsheet cells, generated so the 21 x 21 grid doesn't need writing out
  const colNames = 'ABCDEFGHIJKLMNOPQRSTU'.split('');
  const sheetData = { A: [1, 2, 3, 4, 5, 6, 7], B: [5, 6, 7, 8, 9, 10, 11] };
  let html = `<div class="cell hd hd-col"><svg width="24" height="19" viewBox="0 0 24 19" fill="#b8b8b8"><path d="M22 5v12H10z"/></svg></div>`;
  html += colNames.map(c => `<div class="cell hd hd-col ${c === 'C' ? 'hd-on' : ''}">${c}</div>`).join('');
  for (let r = 1; r <= 21; r++) {
    html += `<div class="cell hd ${r === 1 ? 'hd-on' : ''}">${r}</div>`;
    html += colNames.map(c => {
      const copied = r === 1 && (c === 'A' || c === 'B');
      return `<div class="cell ${copied ? 'cell-copy' : ''}">${sheetData[c]?.[r - 1] ?? ''}</div>`;
    }).join('');
  }
  document.getElementById('grid').innerHTML = html;
</script>
</body>
</html>
